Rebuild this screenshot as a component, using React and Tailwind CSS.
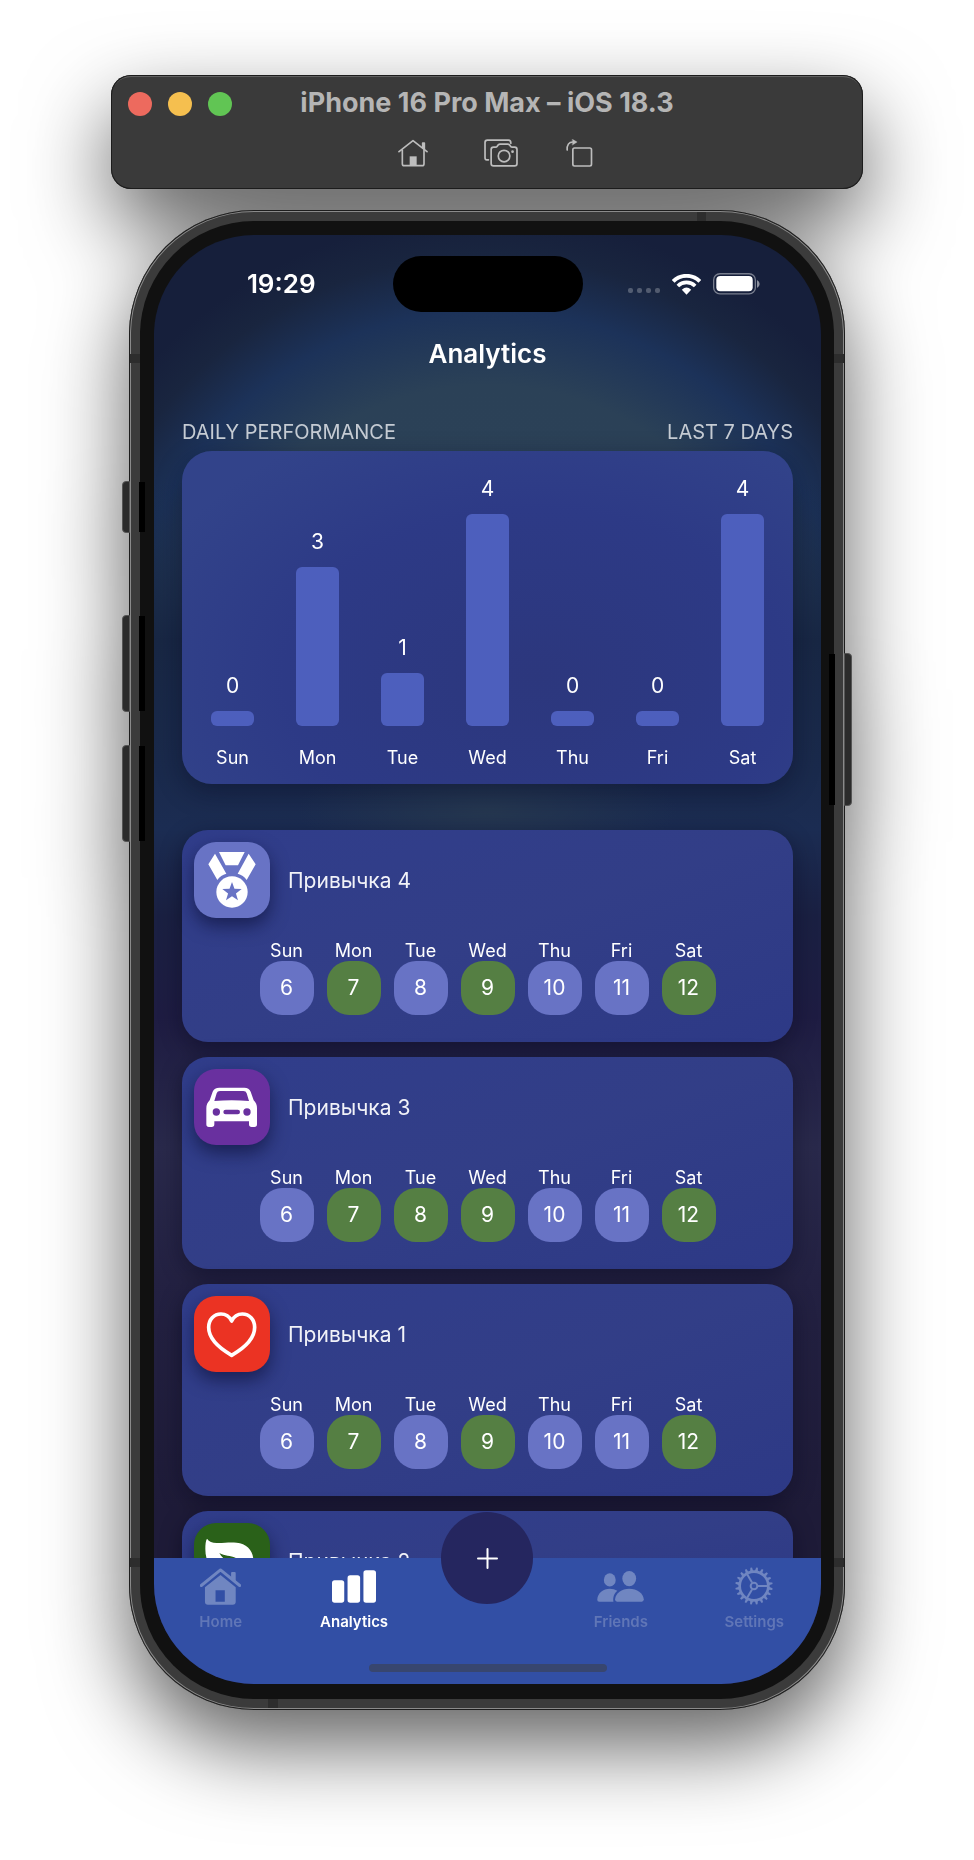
import React from "react";

const week = [
  { day: "Sun", date: 6, count: 0 },
  { day: "Mon", date: 7, count: 3 },
  { day: "Tue", date: 8, count: 1 },
  { day: "Wed", date: 9, count: 4 },
  { day: "Thu", date: 10, count: 0 },
  { day: "Fri", date: 11, count: 0 },
  { day: "Sat", date: 12, count: 4 },
];

const UNIT = 53;
const MIN_BAR = 15;

function MedalIcon() {
  return (
    <svg viewBox="0 0 228 228" className="size-full" fill="#fff" aria-hidden="true">
      <path d="M75 30H152L132 70H95Z" />
      <path d="M63 35L43 67L70 114Q80 99 97 95Z" />
      <path d="M164 35L185 67L158 114Q148 99 131 95Z" />
      <circle cx="114" cy="150" r="47" />
      <path
        fill="#6873c5"
        d="M114 120L121.400 140.500L143 141L125.800 154.200L132 175L114 162.800L96 175L102.200 154.200L85 141L106.600 140.500Z"
      />
    </svg>
  );
}

function CarIcon() {
  return (
    <svg viewBox="0 0 228 228" className="size-full" aria-hidden="true">
      <path
        fill="#fff"
        fillRule="evenodd"
        d="M76 56H151Q165 56 170 68L179 94Q189 103 189 118V166Q189 174 181 174H173Q165 174 165 166V157H61V166Q61 174 53 174H45Q37 174 37 166V118Q37 103 47 94L56 68Q61 56 76 56ZM78 66Q70 66 68 73L61 96Q113 91 165 96L158 73Q156 66 148 66Z"
      />
      <g fill="#69309f">
        <circle cx="67" cy="129" r="11" />
        <circle cx="159" cy="129" r="11" />
        <rect x="88" y="122" width="50" height="14" rx="7" />
      </g>
    </svg>
  );
}

function HeartIcon() {
  return (
    <svg viewBox="0 0 228 228" className="size-full" fill="none" aria-hidden="true">
      <path
        stroke="#fff"
        strokeWidth="11"
        strokeLinejoin="round"
        d="M113 178C78 158 44 128 44 94C44 70 60 54 81 54C96 54 107 63 113 75C119 63 130 54 145 54C166 54 182 70 182 94C182 128 148 158 113 178Z"
      />
    </svg>
  );
}

function LeafIcon() {
  return (
    <svg viewBox="0 0 228 228" className="size-full" aria-hidden="true">
      <path
        fill="#fff"
        d="M39 47C46 57 57 61 72 60C95 59 110 57 128 59C158 62 178 82 178 112C178 144 154 165 120 165C66 165 34 128 34 78C34 64 35 53 39 47Z"
      />
      <path
        fill="#2a6119"
        d="M76 90C92 99 110 98 124 104C150 114 172 140 194 174L184 180C166 150 146 128 118 120C98 114 84 106 76 90Z"
      />
    </svg>
  );
}

function HouseFill() {
  return (
    <svg viewBox="0 0 124 110" width="41" height="37" fill="currentColor" aria-hidden="true">
      <path d="M4 52L62 5L120 52" fill="none" stroke="currentColor" strokeWidth="9" strokeLinecap="round" strokeLinejoin="round" />
      <path d="M94 14Q94 11 97 11H105Q108 11 108 14V42L94 31Z" />
      <path fillRule="evenodd" d="M62 20L108 57V101Q108 110 99 110H24Q15 110 15 101V57ZM47 66V101H75V66Z" />
    </svg>
  );
}

function BarsFill() {
  return (
    <svg viewBox="0 0 133 98" width="44" height="33" fill="currentColor" aria-hidden="true">
      <rect x="0" y="30" width="37" height="68" rx="8" />
      <rect x="47" y="15" width="38" height="83" rx="8" />
      <rect x="95" y="0" width="38" height="98" rx="8" />
    </svg>
  );
}

function PeopleFill() {
  return (
    <svg viewBox="0 0 141 94" width="47" height="31" fill="currentColor" aria-hidden="true">
      <ellipse cx="38" cy="27" rx="18" ry="20" />
      <ellipse cx="97" cy="23" rx="21" ry="23" />
      <path d="M6 93Q0 93 0 87C1 67 18 54 38 54Q51 54 61 60C52 68 47 78 49 93Z" />
      <path d="M60 93Q54 93 54 86C56 67 74 54 97 54C121 54 139 67 141 86Q141 93 135 93Z" />
    </svg>
  );
}

function GearIcon() {
  const teeth = Array.from({ length: 20 }, (_, i) => i * 18 + 9);
  return (
    <svg viewBox="-57 -57 114 114" width="38" height="38" fill="none" stroke="currentColor" aria-hidden="true">
      <circle r="43" strokeWidth="8" />
      <circle r="10" strokeWidth="6" />
      {[0, 120, 240].map((a) => (
        <path key={a} d="M12 0H42" strokeWidth="6" transform={`rotate(${a})`} />
      ))}
      {teeth.map((a) => (
        <path key={a} d="M45 -4.500L56 -2V3L45 4.500Z" fill="currentColor" stroke="none" transform={`rotate(${a})`} />
      ))}
    </svg>
  );
}

const habits = [
  { name: "Привычка 4", tile: "bg-[#6873c5]", Icon: MedalIcon, done: [7, 9, 12] },
  { name: "Привычка 3", tile: "bg-[#69309f]", Icon: CarIcon, done: [7, 8, 9, 12] },
  { name: "Привычка 1", tile: "bg-[#eb3323]", Icon: HeartIcon, done: [7, 9, 12] },
  { name: "Привычка 2", tile: "bg-[#2a6119]", Icon: LeafIcon },
];

function TitleBar() {
  return (
    <header className="w-full max-w-[752px] rounded-[20px] bg-[#3a3a3a] px-4 pt-3 pb-[22px] shadow-[inset_0_0_0_1px_#1c1c1c,inset_0_2px_0_0_#606060]">
      <div className="grid grid-cols-[1fr_auto_1fr] items-center">
        <div className="flex gap-4 pt-px pl-px">
          <button aria-label="Close" className="size-6 rounded-full bg-[#ed6a5e]" />
          <button aria-label="Minimize" className="size-6 rounded-full bg-[#f5bf4f]" />
          <button aria-label="Zoom" className="size-6 rounded-full bg-[#61c554]" />
        </div>
        <h1 className="text-[27px] leading-8 font-bold text-[#b5b5b5]">iPhone 16 Pro Max – iOS 18.3</h1>
      </div>
      <div className="mt-5 flex justify-center gap-14 pl-4 text-[#bdbdbd]">
        <button aria-label="Home">
          <svg viewBox="0 0 90 82" width="30" height="28" fill="none" stroke="currentColor" strokeWidth="5" strokeLinecap="round" strokeLinejoin="round">
            <path d="M3 37L45 4L87 37" />
            <path d="M74 26V11H79V30" />
            <path d="M13 32V73Q13 79 19 79H72Q78 79 78 73V32" />
            <path d="M35 51H56V79H35Z" fill="currentColor" stroke="none" />
          </svg>
        </button>
        <button aria-label="Screenshot">
          <svg viewBox="0 0 100 82" width="34" height="28" fill="none" stroke="currentColor" strokeWidth="5" strokeLinejoin="round" strokeLinecap="round">
            <path d="M13 61H8Q3 61 3 55V10Q3 3 10 3H72Q79 3 79 12" />
            <path d="M28 24H34Q37 24 39 21L42 17Q44 15 47 15H70Q73 15 75 17L78 21Q80 24 83 24H90Q97 24 97 31V72Q97 79 90 79H28Q21 79 21 72V31Q21 24 28 24Z" />
            <circle cx="59" cy="50" r="17" />
            <circle cx="84" cy="37" r="4" fill="currentColor" stroke="none" />
          </svg>
        </button>
        <button aria-label="Rotate" className="-ml-2">
          <svg viewBox="0 0 80 84" width="27" height="28" fill="none" stroke="currentColor" strokeWidth="5" strokeLinecap="round" strokeLinejoin="round">
            <path d="M3 33C2 18 8 9 20 9" />
            <path d="M19 1L33 9L19 18Z" fill="currentColor" strokeWidth="1" />
            <rect x="20" y="27" width="56" height="54" rx="5" />
          </svg>
        </button>
      </div>
    </header>
  );
}

function StatusBar() {
  return (
    <div className="grid h-[98px] shrink-0 grid-cols-[1fr_190px_1fr] items-center">
      <time className="pl-4 text-center text-[26px] leading-8 font-semibold">19:29</time>
      <div className="h-14 rounded-full bg-black" />
      <div className="flex items-center justify-center pr-4">
        <div className="mt-3 mr-3 flex gap-1">
          <i className="size-[5px] rounded-xs bg-white/25" />
          <i className="size-[5px] rounded-xs bg-white/25" />
          <i className="size-[5px] rounded-xs bg-white/25" />
          <i className="size-[5px] rounded-xs bg-white/25" />
        </div>
        <svg viewBox="0 0 86 63" width="29" height="21" fill="none" stroke="#fff" strokeWidth="12" aria-label="Wi-Fi">
          <path d="M3 22A57 57 0 0 1 83 22" />
          <path d="M17 36A37 37 0 0 1 69 36" strokeWidth="11" />
          <path d="M29 47Q43 34 57 47L43 62Z" fill="#fff" stroke="none" />
        </svg>
        <svg viewBox="0 0 142 66" width="47" height="22" className="ml-3" fill="none" aria-label="Battery">
          <rect x="2" y="2" width="126" height="61" rx="19" stroke="#fff" strokeOpacity=".42" strokeWidth="4" />
          <rect x="10" y="9" width="110" height="46" rx="12" fill="#fff" />
          <path d="M133 21Q141 25 141 33Q141 41 133 45Z" fill="#fff" fillOpacity=".5" />
        </svg>
      </div>
    </div>
  );
}

function DailyChart() {
  return (
    <section>
      <div className="mb-[7px] flex justify-between pt-px text-xl leading-6 text-[#c5cbd3]">
        <h3>DAILY PERFORMANCE</h3>
        <p>LAST 7 DAYS</p>
      </div>
      <div className="grid grid-cols-7 items-end rounded-[30px] bg-[radial-gradient(ellipse_420px_280px_at_58%_68%,#2c377d_0,#2d3a86_60%,#32438a_100%)] px-2 pt-[26px] pb-[14px] shadow-[0_8px_26px_rgba(8,10,35,0.4)]">
        {week.map(({ day, count }) => (
          <div key={day} className="flex flex-col items-center">
            <span className="text-[21px] leading-6">{count}</span>
            <div
              className="mt-[13px] w-[43px] rounded-md bg-[#4d5fbd]"
              style={{ height: Math.max(MIN_BAR, count * UNIT) }}
            />
            <span className="mt-5 text-lg leading-6">{day}</span>
          </div>
        ))}
      </div>
    </section>
  );
}

function HabitWeek({ done }) {
  return (
    <ul className="mt-[23px] mb-[15px] flex justify-center gap-[13px]">
      {week.map(({ day, date }) => (
        <li key={day} className="flex w-[54px] flex-col items-center">
          <span className="text-lg leading-5">{day}</span>
          <span
            className={
              done.includes(date)
                ? "flex h-[54px] w-full items-center justify-center rounded-[22px] bg-[#557f43] text-[21px]"
                : "flex h-[54px] w-full items-center justify-center rounded-[22px] bg-[#6873c5] text-[21px]"
            }
          >
            {date}
          </span>
        </li>
      ))}
    </ul>
  );
}

function HabitCard({ name, tile, Icon, done }) {
  return (
    <article className="rounded-[26px] bg-linear-to-br from-[#303d8b] via-[#323e87] to-[#2d3986] p-3 shadow-[0_6px_22px_rgba(8,8,28,0.4)]">
      <div className="flex items-center gap-[18px]">
        <div className={`size-[76px] shrink-0 rounded-[22px] shadow-[0_8px_18px_rgba(10,14,50,0.6)] ${tile}`}>
          <Icon />
        </div>
        <h4 className="pt-0.5 text-[21px] leading-6 text-[#f1f2f8]">{name}</h4>
      </div>
      {done && <HabitWeek done={done} />}
    </article>
  );
}

function Tab({ label, active, children }) {
  return (
    <a
      href="#"
      aria-current={active ? "page" : undefined}
      className={active ? "flex flex-col items-center pt-2 text-white" : "flex flex-col items-center pt-2 text-[#7086c1]"}
    >
      <span className="flex h-10 items-center">{children}</span>
      <span className={active ? "mt-1 text-[15px] leading-6 font-semibold" : "mt-1 text-[15px] leading-6 font-semibold text-[#6076b7]"}>
        {label}
      </span>
    </a>
  );
}

function TabBar() {
  return (
    <nav className="relative z-10 shrink-0 bg-[#324fa5] pb-3">
      <div className="grid h-[106px] grid-cols-5">
        <Tab label="Home"><HouseFill /></Tab>
        <Tab label="Analytics" active><BarsFill /></Tab>
        <button aria-label="Add" className="mx-auto -mt-[46px] flex size-[92px] items-center justify-center rounded-full bg-[#25265f]">
          <svg width="21" height="21" viewBox="0 0 21 21" stroke="#fff" strokeWidth="2" strokeLinecap="round">
            <path d="M10.500 1V20M1 10.500H20" />
          </svg>
        </button>
        <Tab label="Friends"><PeopleFill /></Tab>
        <Tab label="Settings"><GearIcon /></Tab>
      </div>
      <div className="mx-auto h-2 w-[238px] rounded-full bg-[#38466f]" />
    </nav>
  );
}

function SideButtons() {
  return (
    <div aria-hidden="true">
      <i className="absolute top-[271px] -left-[7px] h-[52px] w-2 rounded-l-sm border border-[#555] bg-[#2b2b2b]" />
      <i className="absolute top-[405px] -left-[7px] h-[97px] w-2 rounded-l-sm border border-[#555] bg-[#2b2b2b]" />
      <i className="absolute top-[535px] -left-[7px] h-[97px] w-2 rounded-l-sm border border-[#555] bg-[#2b2b2b]" />
      <i className="absolute top-[443px] -right-[7px] h-[153px] w-2 rounded-r-sm border border-[#555] bg-[#2b2b2b]" />
      <i className="absolute top-[272px] left-[10px] h-[50px] w-[6px] bg-black" />
      <i className="absolute top-[406px] left-[10px] h-[95px] w-[6px] bg-black" />
      <i className="absolute top-[536px] left-[10px] h-[95px] w-[6px] bg-black" />
      <i className="absolute top-[444px] right-[10px] h-[151px] w-[6px] bg-black" />
      <i className="absolute top-[144px] left-px h-[9px] w-[10px] bg-[#2d2d2d]" />
      <i className="absolute top-[144px] right-px h-[9px] w-[10px] bg-[#2d2d2d]" />
      <i className="absolute bottom-[143px] left-px h-[9px] w-[10px] bg-[#2d2d2d]" />
      <i className="absolute right-px bottom-[143px] h-[9px] w-[10px] bg-[#2d2d2d]" />
      <i className="absolute top-[2px] right-[139px] h-[9px] w-[9px] bg-[#2d2d2d]" />
      <i className="absolute bottom-[2px] left-[139px] h-[9px] w-[10px] bg-[#2d2d2d]" />
    </div>
  );
}

export default function App() {
  return (
    <div className="min-h-screen overflow-hidden bg-white pt-[75px] pb-[150px] font-[Inter,sans-serif]">
      <div className="flex flex-col items-center gap-[21px] [filter:drop-shadow(0_36px_42px_rgba(0,0,0,0.62))]">
        <TitleBar />
        <div className="relative w-full max-w-[716px] rounded-[125px] bg-[#3b3b3b] p-[11px] shadow-[inset_0_0_0_1px_#1d1d1d,inset_0_0_0_2px_#8a8a8a]">
          <div className="rounded-[114px] bg-[#111] pt-[14px] pr-[13px] pb-[15px] pl-[14px]">
            <div className="flex aspect-[667/1449] flex-col overflow-hidden rounded-[100px] bg-[radial-gradient(ellipse_190px_60px_at_50%_575px,#253750_0,transparent_100%),linear-gradient(180deg,transparent_0,transparent_17%,#182744_28%,#1a2a4c_37%,#1b2c52_41%,#1a2042_47%,#1e1c42_54%,#29294b_63%,#232142_72%,#1e1b38_88%,#1e1b38_100%),radial-gradient(circle_at_50%_440px,#2c4258_0,#2b4157_290px,#1c3259_365px,#19253f_420px,#161f3b_460px)] text-white">
              <StatusBar />
              <h2 className="h-[42px] shrink-0 text-center text-[26px] leading-[42px] font-semibold">Analytics</h2>
              <main className="min-h-0 flex-1 overflow-y-auto px-7 pt-11 [scrollbar-width:none]">
                <DailyChart />
                <section className="mt-[46px] flex flex-col gap-[15px] pb-12">
                  {habits.map((habit) => (
                    <HabitCard key={habit.name} {...habit} />
                  ))}
                </section>
              </main>
              <TabBar />
            </div>
          </div>
          <SideButtons />
        </div>
      </div>
    </div>
  );
}
